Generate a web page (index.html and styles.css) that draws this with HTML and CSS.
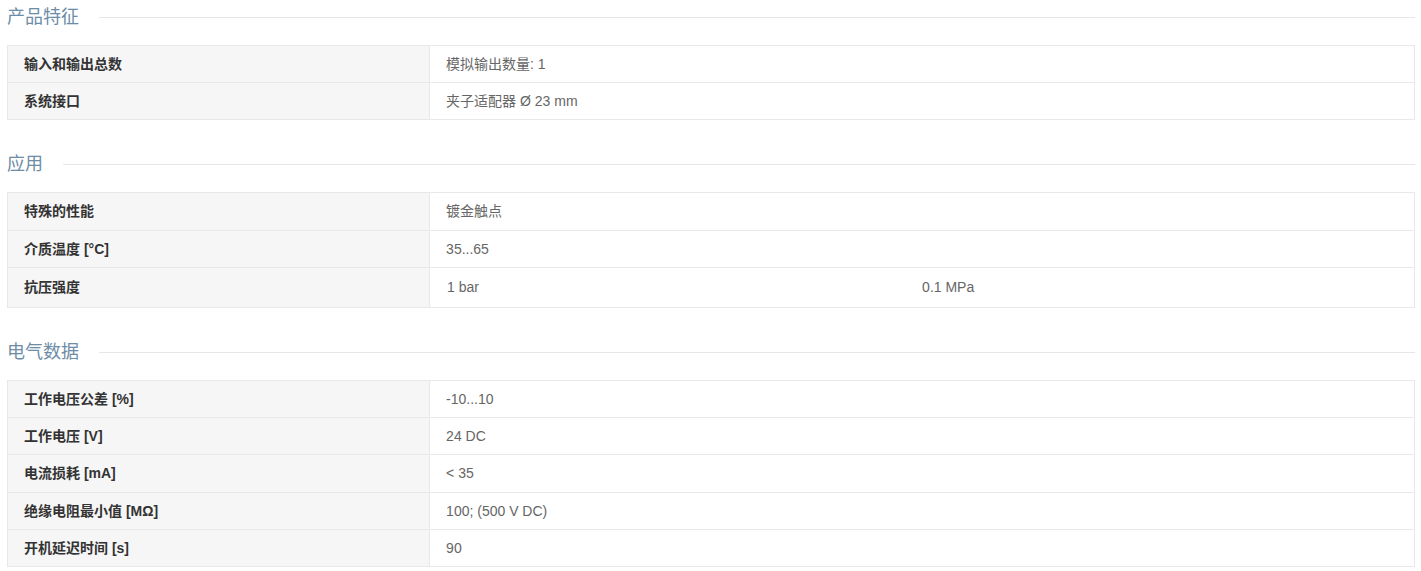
FILE: index.html
```html
<!DOCTYPE html>
<html>
<head>
	<meta charset="utf-8">
	<title>产品参数</title>
	<link rel="stylesheet" href="styles.css">
</head>
<body>
	<div class="specs">
		<h2 class="group-title">产品特征</h2>
		<table class="spec-table">
			<tr><th>输入和输出总数</th><td>模拟输出数量: 1</td></tr>
			<tr><th>系统接口</th><td>夹子适配器 Ø 23 mm</td></tr>
		</table>

		<h2 class="group-title">应用</h2>
		<table class="spec-table">
			<tr><th>特殊的性能</th><td>镀金触点</td></tr>
			<tr><th>介质温度 [°C]</th><td>35...65</td></tr>
			<tr class="split"><th>抗压强度</th><td><div class="pair"><span>1 bar</span><span>0.1 MPa</span></div></td></tr>
		</table>

		<h2 class="group-title">电气数据</h2>
		<table class="spec-table">
			<tr><th>工作电压公差 [%]</th><td>-10...10</td></tr>
			<tr><th>工作电压 [V]</th><td>24 DC</td></tr>
			<tr><th>电流损耗 [mA]</th><td>&lt; 35</td></tr>
			<tr><th>绝缘电阻最小值 [MΩ]</th><td>100; (500 V DC)</td></tr>
			<tr><th>开机延迟时间 [s]</th><td>90</td></tr>
		</table>
	</div>
</body>
</html>
```

FILE: styles.css
```css
body {
	margin: 0;
	font-family: "Liberation Sans", "Noto Sans CJK SC", sans-serif;
	font-size: 14px;
	color: #666;
	background: #fff;
}

.specs {
	padding: 5px 6px 0 7px;
}

.group-title {
	display: flex;
	align-items: center;
	margin: 32px 0 0 0;
	height: 24px;
	font-size: 18px;
	font-weight: normal;
	line-height: 24px;
	color: #6d8ca6;
}

	.group-title:first-child {
		margin-top: 0;
	}

	.group-title::after {
		content: "";
		flex: 1;
		margin-left: 20px;
		border-top: 1px solid #e6e6e6;
	}

.spec-table {
	width: 100%;
	margin-top: 16px;
	border-collapse: collapse;
}

	.spec-table th,
	.spec-table td {
		border: 1px solid #e8e8e8;
		padding: 9px 16px;
		line-height: 18.2px;
		text-align: left;
		vertical-align: middle;
	}

	.spec-table th {
		width: 30%;
		background-color: #f6f6f6;
		font-weight: bold;
		color: #333;
	}

	.spec-table .split td {
		padding: 10.5px 16px 10.5px 17px;
	}

.pair {
	display: grid;
	grid-template-columns: 475px 1fr;
}
```
